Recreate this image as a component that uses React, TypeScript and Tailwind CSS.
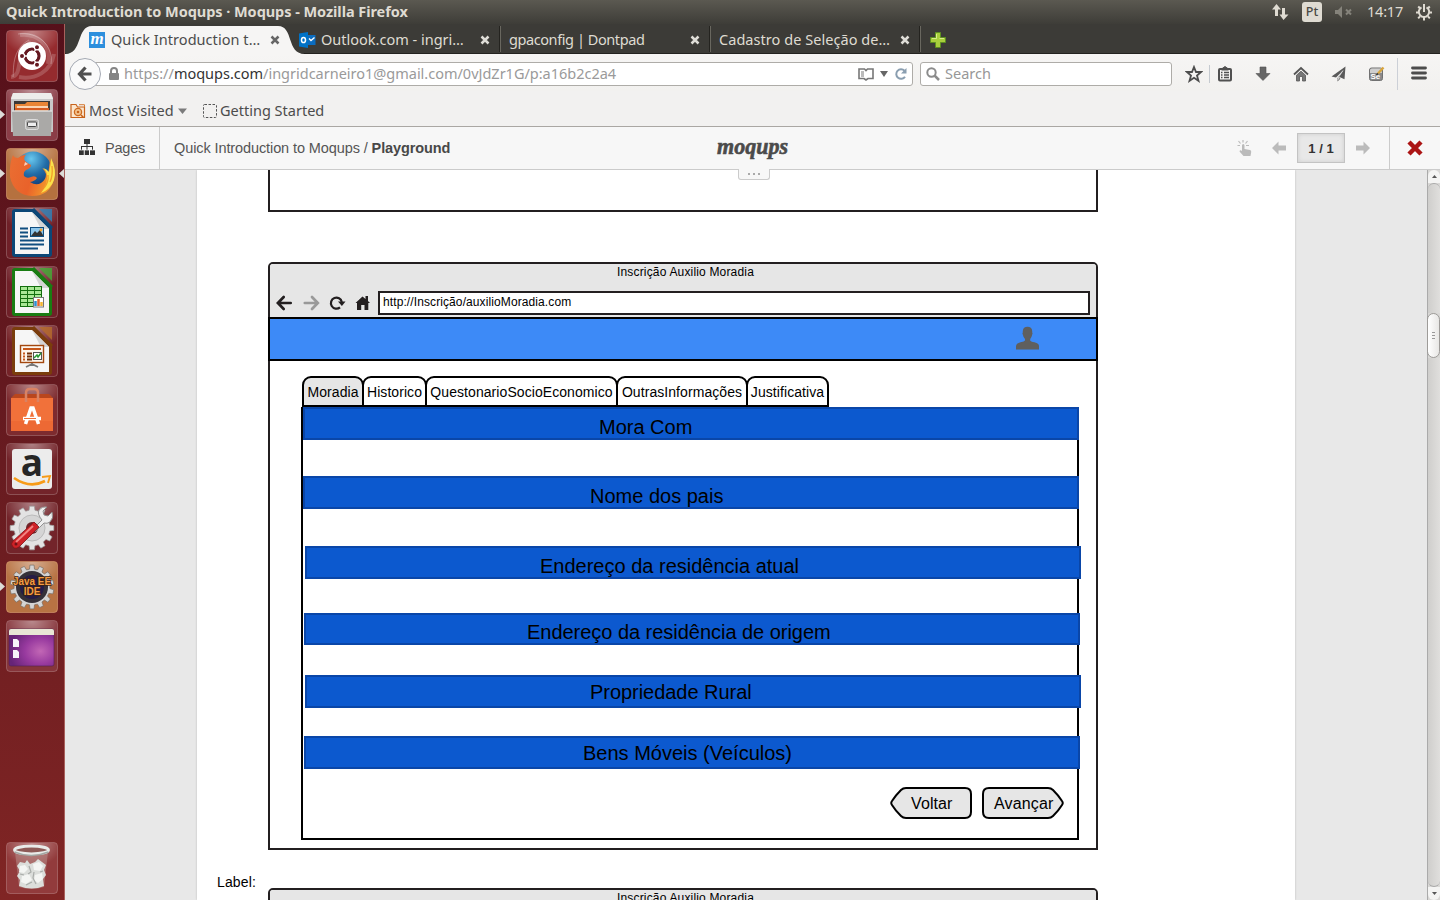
import React from "react";

const UI = "font-['Noto_Sans','Open_Sans',sans-serif]";

function Tile({ y, bg, edge = "rgba(255,255,255,.22)", children, left, right }: { y: string; bg: string; edge?: string; children: React.ReactNode; left?: boolean; right?: boolean }) {
  return (
    <div className={`relative h-[52px] w-full shrink-0 pl-[6px] ${y}`}>
      <svg className="overflow-visible" width="52" height="52" viewBox="0 0 52 52">
        <defs>
          <radialGradient id="shine" cx=".5" cy="0" r=".6">
            <stop offset="0" stopColor="#fff" stopOpacity=".42" />
            <stop offset="1" stopColor="#fff" stopOpacity="0" />
          </radialGradient>
        </defs>
        <rect x=".5" y=".5" width="51" height="51" rx="3.5" fill={bg} stroke={edge} />
        <rect x="1" y="1" width="50" height="40" rx="3" fill="url(#shine)" />
        {children}
      </svg>
      {left && (
        <svg className="absolute left-0 top-[21px]" width="5" height="9"><path d="M0 0L5 4.500L0 9Z" fill="#dcdcd8" /></svg>
      )}
      {right && (
        <svg className="absolute right-0 top-[21px]" width="5" height="9"><path d="M5 0L0 4.500L5 9Z" fill="#dcdcd8" /></svg>
      )}
    </div>
  );
}

const gearPath = (n: number, r1: number, r2: number, c: number) => {
  const pts: string[] = [];
  for (let i = 0; i < n; i++) {
    const a = (i / n) * Math.PI * 2 - Math.PI / 2;
    const s = Math.PI / n;
    [[-0.62, r1], [-0.42, r2], [0.42, r2], [0.62, r1]].forEach(([k, r]) => {
      pts.push(`${(c + Math.cos(a + s * k) * r).toFixed(2)} ${(c + Math.sin(a + s * k) * r).toFixed(2)}`);
    });
  }
  return `M${pts.join("L")}Z`;
};

function Doc({ color, dark, children }: { color: string; dark: string; children: React.ReactNode }) {
  return (
    <>
      <path d="M9 2H28L46 20V47Q46 50 43 50H9Q6 50 6 47V5Q6 2 9 2Z" fill={dark} />
      <path d="M33 2H46V15Z" fill={color} opacity=".8" />
      <path d="M9 5H26L43 22V47H9Z" fill="#f6f6f6" />
      <path d="M26 5L43 22H35Z" fill="#d4d4d4" />
      <path d="M27 2L46 21" stroke={dark} strokeWidth="3" />
      {children}
    </>
  );
}

function Launcher() {
  return (
    <aside className="flex w-[65px] shrink-0 flex-col border-r border-[#a8605c] bg-linear-to-b from-[#56101a] via-[#681b20] to-[#802524] pt-[6px] pb-[6px]">
      <Tile y="" bg="#952b2e">
        <path d="M5 47C18 46 8 22 25 12 M14 5C31 3 46 15 42 34 M48 24C45 42 29 50 13 47" fill="none" stroke="#fff" strokeOpacity=".18" strokeWidth="4" />
        <path d="M7 47C8 40 5 20 23 10 M12 4C31 1 48 15 45 34" fill="none" stroke="#fff" strokeOpacity=".3" strokeWidth="1" />
        <circle cx="26" cy="26" r="14" fill="#fff" />
        <circle cx="26" cy="26" r="7" fill="none" stroke="#641820" strokeWidth="3.200" />
        <g stroke="#fff" strokeWidth="1.200">
          <path d="M26 26L18 26M26 26L31 17M26 26L31 35" strokeWidth="1.400" />
          <circle cx="16" cy="26" r="2.600" fill="#641820" />
          <circle cx="31" cy="17.300" r="2.600" fill="#641820" />
          <circle cx="31" cy="34.700" r="2.600" fill="#641820" />
        </g>
        <circle cx="26" cy="26" r="5.200" fill="#fff" />
      </Tile>
      <Tile y="mt-[7px]" bg="#8b3d47" left>
        <path d="M7 4H45L47 9V43H5V9Z" fill="#c9c9c9" />
        <path d="M7 4H45L47 10H5Z" fill="#ededeb" />
        <rect x="8" y="12" width="36" height="10" fill="#3c3a38" />
        <path d="M9 15H19L21 13H42V23H9Z" fill="#e98536" />
        <path d="M11 18H42" stroke="#fff1df" strokeWidth="1.500" />
        <path d="M9 20H43" stroke="#d55c22" strokeWidth="2" />
        <path d="M6 22H46L45 47H7Z" fill="#aaa9a7" />
        <path d="M6 22H46" stroke="#ddd" strokeWidth="1.500" />
        <rect x="19.500" y="30.500" width="13" height="10" rx="2" fill="#b5b4b2" stroke="#ddd" />
        <rect x="21.500" y="33" width="9" height="4.500" rx="1" fill="#eee" stroke="#444" />
      </Tile>
      <Tile y="mt-[7px]" bg="#b5713f" edge="rgba(235,180,130,.5)" left right>
        <defs>
          <radialGradient id="globe" cx=".45" cy=".2" r=".75"><stop offset="0" stopColor="#68c7ee" /><stop offset=".55" stopColor="#226da8" /><stop offset="1" stopColor="#123d78" /></radialGradient>
          <linearGradient id="fox" x1="0" y1="0" x2="1" y2=".3"><stop offset="0" stopColor="#ea6f33" /><stop offset=".6" stopColor="#e9622a" /><stop offset="1" stopColor="#f39a2c" /></linearGradient>
        </defs>
        <circle cx="27" cy="22" r="18.500" fill="url(#globe)" />
        <path d="M7 7Q8 10 12 10Q15 7 20 6.500Q17 10 19 13Q21 15 25 17Q25 20 20 22Q17 24 18 28Q21 31 25 29Q29 27 31 30Q29 33 24 34Q30 38 35 35Q40 32 40 26Q39 23 36 20Q40 22 42 27L44 12Q50 21 48 31Q44 48 26 48Q8 47 4 29Q3 16 7 7Z" fill="url(#fox)" />
        <path d="M45 10Q51 22 48 32Q45 41 35 45Q41 38 41 30Q42 25 37 20Q41 21 43 24Q45 17 45 10Z" fill="#fbe14a" />
        <path d="M42 27Q43 34 38 40M46 18Q47 28 44 34" stroke="#f29d28" strokeWidth="1.300" fill="none" />
        <path d="M19 14L22 16L18 18Z" fill="#fff" opacity=".7" />
      </Tile>
      <Tile y="mt-[7px]" bg="#6f2028">
        <Doc color="#2d83ba" dark="#0c4777">
          <path d="M14 21.500H22M14 25.500H22M14 29.500H22M14 33.500H38M14 37.500H38M14 41.500H32" stroke="#104e80" strokeWidth="2" />
          <rect x="24.500" y="20.500" width="13" height="9" fill="#8ec6eb" stroke="#104e80" />
          <path d="M25 29L29 24L31 26L34 23L37 28V29Z" fill="#333" /><circle cx="35" cy="23" r="1.400" fill="#f5a32e" />
        </Doc>
      </Tile>
      <Tile y="mt-[7px]" bg="#6f2028">
        <Doc color="#42ad35" dark="#197c12">
          <rect x="14" y="20" width="22" height="21" fill="#126e0d" />
          {[20, 24, 28, 32, 36].map((y) => <path key={y} d={`M15 ${y + 2.5}H21M22 ${y + 2.5}H28M29 ${y + 2.5}H35`} stroke="#a9e795" strokeWidth="2.800" />)}
          <rect x="27.500" y="31.500" width="10" height="9.500" fill="#fff" stroke="#777" />
          <path d="M29.500 40V35" stroke="#2f8fd0" strokeWidth="2.500" /><path d="M32.500 40V33" stroke="#e5622b" strokeWidth="2.500" /><path d="M35.500 40V36" stroke="#f4b52f" strokeWidth="2.500" />
        </Doc>
      </Tile>
      <Tile y="mt-[7px]" bg="#752328">
        <Doc color="#b76b2a" dark="#7a3d0c">
          <rect x="14.500" y="20.500" width="23" height="17" fill="#fdf5ec" stroke="#a3480f" strokeWidth="1.400" />
          <path d="M17 24H35" stroke="#c6571a" strokeWidth="2" />
          <path d="M17 28.500H19M17 31.500H19M17 34.500H19" stroke="#c6571a" strokeWidth="2" /><path d="M21 28.500H26M21 31.500H26M21 34.500H26" stroke="#713009" strokeWidth="2" />
          <rect x="27.500" y="27.500" width="8" height="7" fill="#fff" stroke="#555" /><path d="M28 33L31 30L32 32L35 28" fill="none" stroke="#269831" strokeWidth="1.500" />
          <path d="M26 38V41M26 39L20 42M26 39L32 42" stroke="#777" strokeWidth="1.800" />
        </Doc>
      </Tile>
      <Tile y="mt-[7px]" bg="#7d2b2f">
        <path d="M5 14L9 10H43L47 14Z" fill="#b9461d" />
        <path d="M5 14H47V47H5Z" fill="#f1713a" /><path d="M5 37H47V47H5Z" fill="#ed6934" />
        <path d="M20 18V9Q20 5 24 5H28Q32 5 32 9V18" fill="none" stroke="#d98263" strokeWidth="2.500" />
        <path d="M19.500 40L25 24H27L32.500 40" fill="none" stroke="#fff" strokeWidth="3.500" /><path d="M17 34.500H35" stroke="#fff" strokeWidth="3.500" /><path d="M18 34.500H30" stroke="#f1713a" strokeWidth="1" />
      </Tile>
      <Tile y="mt-[7px]" bg="#73242a">
        <rect x="6" y="6" width="40" height="40" rx="3" fill="#ececec" />
        <text x="26" y="33" textAnchor="middle" fontFamily="Open Sans, sans-serif" fontWeight="700" fontSize="37" fill="#262626">a</text>
        <path d="M8 35Q24 46 39 38" fill="none" stroke="#f79b18" strokeWidth="2.600" /><path d="M36 34L44 33L42 40" fill="none" stroke="#f79b18" strokeWidth="1.900" />
      </Tile>
      <Tile y="mt-[7px]" bg="#73242a">
        <path d={gearPath(12, 18, 22, 26)} fill="#e3e3e3" stroke="#999" strokeWidth=".7" />
        <circle cx="26" cy="26" r="13" fill="#d5d5d5" stroke="#bbb" /><circle cx="26" cy="26" r="6" fill="#6e252a" />
        <path d="M27 27L36 18Q31 12 33 8Q36 4 41 5L37 9L38 13L42 14L46 10Q48 16 44 20Q41 22 38 21L29 30Z" fill="#eee" stroke="#888" strokeWidth=".9" />
        <path d="M28 20L33 25L14 44Q10 48 7 45Q4 42 7 39Z" fill="#ce2227" stroke="#821116" strokeWidth=".8" /><path d="M27 24L10 40" stroke="#f28482" strokeWidth="1.800" />
        <circle cx="10" cy="42" r="1.500" fill="#701217" />
      </Tile>
      <Tile y="mt-[7px]" bg="#b87343" edge="rgba(235,180,130,.5)" left>
        <path d={gearPath(14, 18, 22, 26)} fill="#d4d4d4" stroke="#776b61" strokeWidth=".7" />
        <circle cx="26" cy="26" r="16" fill="#343038" /><circle cx="26" cy="26" r="12" fill="#251c47" />
        <g fontFamily="Liberation Sans, sans-serif" fontWeight="700" fontSize="10" textAnchor="middle" fill="#f49b43" stroke="#3b2211" strokeWidth="1.500" paintOrder="stroke">
          <text x="26" y="24" textLength="38" lengthAdjust="spacingAndGlyphs">Java EE</text><text x="26" y="34">IDE</text>
        </g>
      </Tile>
      <Tile y="mt-[7px]" bg="#86353b">
        <defs><radialGradient id="desk" cx=".7" cy=".6" r=".7"><stop offset="0" stopColor="#c267b5" /><stop offset=".5" stopColor="#983a9f" /><stop offset="1" stopColor="#662477" /></radialGradient></defs>
        <rect x="3" y="9" width="45" height="37" rx="2" fill="url(#desk)" stroke="#53204d" strokeWidth=".6" />
        <path d="M3 11Q3 9 5 9H46Q48 9 48 11V15H3Z" fill="#e8e6d5" />
        <path d="M7 19H11L13 21V27H7ZM7 30H11L13 32V38H7Z" fill="#f8f4fa" />
      </Tile>
      <Tile y="mt-auto" bg="#923b3c">
        <path d="M9 10H42L38 45Q26 49 13 45Z" fill="#b9918d" fillOpacity=".5" />
        <path d="M11 24L14 20L19 21L21 18L24 22L29 20L32 17L36 20L40 23L38 28L40 33L37 37L38 44Q26 49 13 44L14 38L11 34L14 29Z" fill="#dcdedb" />
        <path d="M14 24L19 23L22 27L18 31L13 30ZM27 22L33 20L37 24L34 29L28 28ZM16 34L23 32L26 38L20 42L15 40ZM29 33L36 31L37 37L32 41L28 38Z" fill="#f4f5f3" />
        <path d="M23 24L25 30L22 32M28 30L27 36L30 42M14 32L18 33M34 30L37 29M20 43L26 40" fill="none" stroke="#a9aca9" strokeWidth="1.200" />
        <ellipse cx="25.500" cy="8" rx="17" ry="3.800" fill="#8e5a57" stroke="#e9ebe9" strokeWidth="2.800" />
        <path d="M8.500 10Q25 17 42.500 10" fill="none" stroke="#a3a8a4" strokeWidth="1.500" />
      </Tile>
    </aside>
  );
}

function TopBar() {
  return (
    <header className={`flex h-6 shrink-0 items-center bg-linear-to-b from-[#5b5951] to-[#3e3d38] pl-[6px] text-[#dfdbd2] ${UI}`}>
      <span className="-mt-px whitespace-nowrap text-[14.5px] font-bold tracking-[-0.05px]">Quick Introduction to Moqups · Moqups - Mozilla Firefox</span>
      <div className="ml-auto flex items-center pr-[7px]">
        <svg width="18" height="18" viewBox="0 0 18 18" fill="#dfdbd2"><path d="M5.500 1L10 6.500H7V13H4V6.500H1ZM12.500 17L8.500 11.500H11V5H14V11.500H17.500Z" /></svg>
        <div className="ml-[13px] flex h-5 w-5 items-center justify-center rounded-[3px] bg-[#dfdbd2] text-[12.5px] font-medium text-[#4a4944]">Pt</div>
        <svg className="ml-[12px]" width="19" height="14" viewBox="0 0 19 14"><path d="M1 5H4L8 1V13L4 9H1Z" fill="#85837b" /><path d="M12 4.500L17 9.500M17 4.500L12 9.500" stroke="#85837b" strokeWidth="2" /></svg>
        <span className="-mt-px ml-[14px] w-[36px] whitespace-nowrap text-[14.5px] tracking-[-0.2px]">14:17</span>
        <svg className="ml-[12px]" width="18" height="18" viewBox="0 0 18 18"><g fill="none" stroke="#dfdbd2" strokeWidth="2"><path d="M6.500 4.300A5.200 5.200 0 1 0 11.500 4.300M9 1V9" /><path d="M1 9.500H3.500M14.500 9.500H17M9 14V17.500M3.200 15.300L5 13.300M14.800 15.300L13 13.300M3.200 3.500L5 5.300M14.800 3.500L13 5.300" /></g></svg>
      </div>
    </header>
  );
}

function Close({ c = "#e0ded8" }: { c?: string }) {
  return <svg className="shrink-0" width="10" height="10" viewBox="0 0 10 10"><path d="M1.500 1.500L8.500 8.500M8.500 1.500L1.500 8.500" stroke={c} strokeWidth="2.500" /></svg>;
}

function Sep() {
  return <div className="h-[26px] w-[2px] shrink-0 border-l border-[#24231f] bg-[#69675f]" />;
}

function TabStrip() {
  return (
    <div className={`relative flex h-[30px] shrink-0 items-center border-b border-[#242320] bg-[#3c3b37] text-[14.5px] text-[#dfdbd2] ${UI}`}>
      <svg className="absolute left-0 top-[2px]" width="240" height="28" viewBox="0 0 240 28"><path d="M0 28C18 28 11 0 27 0H213C229 0 221 28 240 28Z" fill="#f6f5f4" /></svg>
      <div className="relative flex h-full w-[234px] items-center pl-[24px] pr-[19px] pt-[2px] text-[#4c4c4c]">
        <svg className="overflow-visible" width="16" height="16" viewBox="0 0 16 16"><rect width="16" height="16" fill="#2d8fdd" /><text x="8" y="12" textAnchor="middle" fontFamily="Liberation Serif, serif" fontStyle="italic" fontWeight="700" fontSize="17" fill="#fff">m</text></svg>
        <span className="ml-[6px] grow whitespace-nowrap tracking-[0.05px]">Quick Introduction t…</span>
        <Close c="#666" />
      </div>
      <div className="relative flex h-full w-[200px] items-center pr-[9px] pt-[2px]">
        <svg width="17" height="16" viewBox="0 0 17 16"><path d="M7 3H16.500V13H7Z" fill="#0a6cc0" /><path d="M0 1.500L9 0V16L0 14.500Z" fill="#0072c6" /><ellipse cx="4.500" cy="8" rx="2" ry="2.600" fill="none" stroke="#fff" strokeWidth="1.500" /><path d="M10 6.500L12 8.500L15.500 5.500" fill="none" stroke="#fff" strokeWidth="1.300" /></svg>
        <span className="ml-[5px] grow whitespace-nowrap">Outlook.com - ingri…</span>
        <Close />
      </div>
      <Sep />
      <div className="flex h-full w-[208px] items-center pl-[8px] pr-[9px] pt-[2px]"><span className="grow whitespace-nowrap tracking-[-0.42px]">gpaconfig | Dontpad</span><Close /></div>
      <Sep />
      <div className="flex h-full w-[208px] items-center pl-[8px] pr-[9px] pt-[2px]"><span className="grow whitespace-nowrap tracking-[0.05px]">Cadastro de Seleção de…</span><Close /></div>
      <Sep />
      <svg className="ml-[9px] mt-[2px]" width="16" height="16" viewBox="0 0 16 16"><path d="M5.500 .5H10.500V5.500H15.500V10.500H10.500V15.500H5.500V10.500H.5V5.500H5.500Z" fill="#a8ce3c" stroke="#5d8f20" /><path d="M6.500 2V6.500H2M9.500 6.500H14" fill="none" stroke="#d9ec8a" /></svg>
    </div>
  );
}

function NavBar() {
  return (
    <div className={`flex h-[37px] shrink-0 items-center bg-linear-to-b from-[#f6f5f4] to-[#f2f1ef] pt-[3px] text-[14.5px] ${UI}`}>
      <div className="z-10 ml-[4px] flex h-8 w-8 shrink-0 items-center justify-center rounded-full border border-[#a4a9b3] bg-[#fafafa]">
        <svg width="16" height="16" viewBox="0 0 16 16"><path d="M14.500 8H3M8.500 1.500L2.500 8L8.500 14.500" fill="none" stroke="#505050" strokeWidth="3.200" /></svg>
      </div>
      <div className="-ml-[6px] flex h-6 w-[818px] shrink-0 items-center rounded-r-[3px] border border-[#aeaca8] bg-white pl-[12px] pr-[4px] text-[#9a9a9a]">
        <svg width="12" height="14" viewBox="0 0 12 14"><rect x="1" y="6" width="10" height="7" rx="1" fill="#858585" /><path d="M3 7V4A3 3 0 0 1 9 4V7" fill="none" stroke="#858585" strokeWidth="2" /></svg>
        <span className="ml-[4px] grow whitespace-nowrap tracking-[-0.01px]">https://<span className="text-[#333]">moqups.com</span>/ingridcarneiro1@gmail.com/0vJdZr1G/p:a16b2c2a4</span>
        <svg width="16" height="13" viewBox="0 0 16 13" fill="none" stroke="#777" strokeWidth="1.600"><path d="M1 1H6.500L8 2.500L9.500 1H15V10.500H10L8 12L6 10.500H1Z" /><path d="M3 4H6M3 6H6M3 8H6" strokeWidth="1" /></svg>
        <svg className="ml-[6px]" width="8" height="6" viewBox="0 0 8 6"><path d="M0 0H8L4 6Z" fill="#666" /></svg>
        <svg className="ml-[6px]" width="14" height="14" viewBox="0 0 14 14"><path d="M10.500 3.700A4.800 4.800 0 1 0 11 9.800" fill="none" stroke="#8a9eb0" strokeWidth="2" /><path d="M12.500 1V6.500H7Z" fill="#8a9eb0" /></svg>
      </div>
      <div className="ml-[7px] flex h-6 w-[252px] shrink-0 items-center rounded-[3px] border border-[#aeaca8] bg-white pl-[5px] text-[#979797]">
        <svg width="14" height="14" viewBox="0 0 14 14"><circle cx="5.500" cy="5.500" r="4.200" fill="none" stroke="#8b8b8b" strokeWidth="2" /><path d="M8.500 8.500L13 13" stroke="#8b8b8b" strokeWidth="2.500" /></svg>
        <span className="ml-[5px]">Search</span>
      </div>
      <div className="flex grow items-center pl-[13px] text-[#505050]">
        <svg width="18" height="18" viewBox="0 0 18 18"><path d="M9 2L11 7H16L12 10.500L13.500 15.800L9 12.800L4.500 15.800L6 10.500L2 7H7Z" fill="none" stroke="#4d4d4d" strokeWidth="1.800" /></svg>
        <div className="ml-[6px] h-[18px] w-px bg-[#c5cad0]" />
        <svg className="ml-[7px]" width="16" height="16" viewBox="0 0 16 16"><rect x="2" y="3" width="12" height="11.500" rx="1" fill="none" stroke="#505050" strokeWidth="2" /><path d="M4.500 3L8 .5L11.500 3V4H4.500Z" fill="#505050" stroke="#505050" /><path d="M4 6.500H5.500M7 6.500H12M4 9H5.500M7 9H12M4 11.500H5.500M7 11.500H12" stroke="#505050" strokeWidth="1.300" /></svg>
        <svg className="ml-[22px]" width="16" height="16" viewBox="0 0 16 16"><path d="M5 1H11V7.500H15L8 14.500L1 7.500H5Z" fill="#666" stroke="#505050" strokeWidth=".6" /></svg>
        <svg className="ml-[22px]" width="16" height="16" viewBox="0 0 16 16"><path d="M1 8.500L8 2L15 8.500" fill="none" stroke="#555" strokeWidth="1.800" /><path d="M3.500 9.200L8 5.200L12.500 9.200V15H9.500V10.500H6.500V15H3.500Z" fill="#777" stroke="#555" strokeWidth=".8" /></svg>
        <svg className="ml-[22px]" width="16" height="16" viewBox="0 0 16 16"><path d="M14.500 .5L.5 10.500L5 11.500L12 4.500L6.500 12L9 11.200L13.500 13.200Z" fill="#5a5a5a" /><path d="M6.500 12V15.500L9.500 12.500" fill="#5a5a5a" /><path d="M12 4.500L8 10.500L7 14" stroke="#eee" strokeWidth=".8" fill="none" /></svg>
        <svg className="ml-[22px] overflow-visible" width="16" height="16" viewBox="0 0 16 16"><rect x=".5" y="2" width="13" height="12.500" rx="2" fill="#8a8a8a" stroke="#717171" /><path d="M1 4Q1 2.500 3 2.500H12L13 7H1Z" fill="#cfcfcf" /><text x="1.500" y="13" fontFamily="Liberation Sans" fontWeight="700" fontSize="8" fill="#fff">Se</text><path d="M9 7.500L14.500 1.500" stroke="#d8a43b" strokeWidth="2.300" /><path d="M7.500 9L9 7.500" stroke="#333" strokeWidth="1.500" /></svg>
        <div className="ml-[12px] h-[32px] w-px bg-[#ccd0d7]" />
        <svg className="-mt-[2px] ml-[13px]" width="16" height="14" viewBox="0 0 16 14"><path d="M1.500 2H14.500M1.500 7H14.500M1.500 12H14.500" stroke="#4c4c4c" strokeWidth="2.800" strokeLinecap="round" /></svg>
      </div>
    </div>
  );
}

function Bookmarks() {
  return (
    <div className={`flex h-[36px] shrink-0 items-center border-b border-[#aaa7a3] bg-[#f2f1f0] pl-[5px] pt-[4px] text-[14.5px] text-[#4c4c4c] ${UI}`}>
      <svg width="16" height="16" viewBox="0 0 16 16"><path d="M1 1.500H6L7.500 4H14.500V14.500H1Z" fill="#fbe6ce" stroke="#c8631b" strokeWidth="1.200" /><path d="M9 1.700H14.500V4" fill="none" stroke="#d47a34" /><circle cx="8" cy="9" r="3.600" fill="#f3c590" stroke="#cd6a20" strokeWidth="1.300" /><circle cx="8" cy="9" r="1.300" fill="#c8631b" /><path d="M11 12L13.500 14.500" stroke="#c8631b" strokeWidth="1.600" /></svg>
      <span className="ml-[3px] w-[86px] whitespace-nowrap tracking-[0.12px]">Most Visited</span>
      <svg className="ml-[3px]" width="9" height="6" viewBox="0 0 9 6"><path d="M0 .5H9L4.500 6Z" fill="#7b7b7b" /></svg>
      <svg className="ml-[15px]" width="16" height="16" viewBox="0 0 16 16"><rect x="1.500" y="1.500" width="13" height="13" rx="1" fill="none" stroke="#555" strokeDasharray="2.500 1.500" /></svg>
      <span className="ml-[2px] whitespace-nowrap">Getting Started</span>
    </div>
  );
}

function MoqupsHeader() {
  return (
    <div className="relative flex h-[43px] shrink-0 items-center border-b border-[#cbcbcb] bg-[#f7f7f7] font-['Liberation_Sans',Arial,sans-serif] text-[#555]">
      <div className="flex h-full w-[95px] items-center border-r border-[#cbcbcb] pl-[14px] text-[14.500px]">
        <svg className="-mt-[2px]" width="16" height="16" viewBox="0 0 16 16" fill="#333"><path d="M5 0H11V5H8.500V7H14V11H16V16H10.500V11H13V8H8.500V11H11V16H5V11H7.500V8H3V11H5.500V16H0V11H2V7H7.500V5H5Z" /><path d="M0 11H16" stroke="#f7f7f7" strokeWidth=".7" /><path d="M5.250 11V16M10.500 11V16" stroke="#f7f7f7" strokeWidth="1" /></svg>
        <span className="ml-[10px] pt-[2px] tracking-[-0.2px]">Pages</span>
      </div>
      <span className="ml-[14px] w-[300px] whitespace-nowrap pt-[2px] text-[14.500px] tracking-[-0.1px]">Quick Introduction to Moqups / <b className="text-[#484848]">Playground</b></span>
      <svg className="ml-[242px] overflow-visible" width="74" height="26" viewBox="0 0 74 26"><text x="1" y="18.500" textLength="71" lengthAdjust="spacingAndGlyphs" fontFamily="Liberation Serif, serif" fontStyle="italic" fontWeight="700" fontSize="23" fill="#4b4b4b" stroke="#4b4b4b" strokeWidth=".6">moqups</text></svg>
      <div className="ml-auto flex h-full items-center">
        <svg width="16" height="18" viewBox="0 0 16 18"><path d="M5 6.500Q5 5 6.200 5Q7.500 5 7.500 6.500V10L13 11Q14.500 11.500 14.200 13L13.500 17H6.500L2.500 12.500Q3 10.500 5 12Z" fill="#bbb" /><path d="M6 3.500V1M3.500 4.500L1.500 2M8.500 4.500L10.500 2M3 6.500H.5M9 6.500H12" stroke="#bbb" strokeWidth="1.200" /></svg>
        <svg className="ml-[18px]" width="16" height="14" viewBox="0 0 16 14"><path d="M1 7L7.500 .5V4.500H15V9.500H7.500V13.500Z" fill="#bbb" /></svg>
        <div className="ml-[10px] flex h-[30px] w-[48px] items-center justify-center border border-[#c3c3c3] bg-[#e8e8e8] pt-[2px] text-[13px] font-bold text-[#333] shadow-[inset_0_0_4px_#ccc]">1 / 1</div>
        <svg className="ml-[10px]" width="16" height="14" viewBox="0 0 16 14"><path d="M15 7L8.500 .5V4.500H1V9.500H8.500V13.500Z" fill="#bbb" /></svg>
        <div className="ml-[18px] flex h-full w-[51px] items-center justify-center border-l border-[#cbcbcb]">
          <svg width="16" height="16" viewBox="0 0 16 16"><path d="M2 2L14 14M14 2L2 14" stroke="#ab1414" strokeWidth="4.500" /></svg>
        </div>
      </div>
      <div className="absolute left-[673px] top-[42px] z-10 flex h-[11px] w-[32px] items-center justify-center gap-[3px] rounded-b-[3px] border border-t-0 border-[#cbcbcb] bg-[#f7f7f7]">
        <i className="size-[2px] bg-[#aaa]" /><i className="size-[2px] bg-[#aaa]" /><i className="size-[2px] bg-[#aaa]" />
      </div>
    </div>
  );
}

function WindowChrome() {
  return (
    <div className="h-[53px] shrink-0 bg-[#e6e6e6] text-[12px] text-black">
      <div className="h-[27px] pl-[347px] leading-[16px] tracking-[0.17px]">Inscrição Auxilio Moradia</div>
      <div className="flex items-center pl-[6px] pr-[6px]">
        <svg width="17" height="16" viewBox="0 0 17 16"><path d="M14.700 8H2.500M7.700 2L1.900 8L7.700 14" fill="none" stroke="#231f20" strokeWidth="2.700" strokeLinecap="round" /></svg>
        <svg className="ml-[10px]" width="17" height="16" viewBox="0 0 17 16"><path d="M1.800 8H14M9 2L14.800 8L9 14" fill="none" stroke="#999" strokeWidth="2.700" strokeLinecap="round" /></svg>
        <svg className="ml-[9px]" width="17" height="16" viewBox="0 0 17 16"><path d="M11 12.300A5.500 5.500 0 1 1 12.800 7" fill="none" stroke="#231f20" strokeWidth="2.200" /><path d="M9 6.500H16.500L12.900 11Z" fill="#231f20" /></svg>
        <svg className="ml-[9px]" width="16" height="16" viewBox="0 0 16 16"><path d="M.5 8L7.500 1.500L10.500 4V1H13V6L15 8H13.300V15H9.500V10H6.200V15H2V8Z" fill="#231f20" /></svg>
        <div className="ml-[7px] h-[24px] grow border-2 border-[#231f20] bg-white pl-[3px] leading-[18px] tracking-[0.1px]">http://Inscrição/auxilioMoradia.com</div>
      </div>
    </div>
  );
}

const tabs = [
  { t: "Moradia", w: "w-[62px]", bg: "bg-[#e6e6e6]" },
  { t: "Historico", w: "w-[65px]", bg: "bg-white" },
  { t: "QuestonarioSocioEconomico", w: "w-[193px]", bg: "bg-white" },
  { t: "OutrasInformações", w: "w-[132px]", bg: "bg-white" },
  { t: "Justificativa", w: "w-[83px]", bg: "bg-white" },
];

const bars = [
  { t: "Mora Com", cls: "ml-0 h-[33px] leading-[36px]", pl: "pl-[294px]" },
  { t: "Nome dos pais", cls: "mt-[36px] ml-0 h-[33px] leading-[36px]", pl: "pl-[285px]" },
  { t: "Endereço da residência atual", cls: "mt-[37px] ml-[2px] h-[33px] leading-[36px]", pl: "pl-[233px]" },
  { t: "Endereço da residência de origem", cls: "mt-[34px] ml-[1px] h-[32px] leading-[34px] tracking-[-0.03px]", pl: "pl-[221px]" },
  { t: "Propriedade Rural", cls: "mt-[30px] ml-[2px] h-[33px] leading-[30px] tracking-[-0.04px]", pl: "pl-[283px]" },
  { t: "Bens Móveis (Veículos)", cls: "mt-[28px] ml-[1px] h-[33px] leading-[30px]", pl: "pl-[277px]" },
];

function MainWindow() {
  return (
    <div className="ml-[71px] mt-[50px] flex h-[588px] w-[830px] shrink-0 flex-col rounded-t-[5px] border-2 border-[#231f20] bg-white">
      <div className="overflow-hidden rounded-t-[3px]"><WindowChrome /></div>
      <div className="-mx-[2px] flex h-[44px] shrink-0 items-start border-2 border-black bg-[#3d8af7] pl-[745px] pt-[7px]">
        <svg width="25" height="24" viewBox="0 0 25 24"><path d="M12.500 .8Q16.800 .8 17.200 5V6.500Q18 7 17.200 8.500Q16.500 12 15.200 13V14.500Q15.500 15.500 19.500 16.300Q24 17.500 24 20V23.500H1V20Q1 17.500 5.500 16.300Q9.500 15.500 10 14.500V13Q8.500 12 7.800 8.500Q7 7 7.800 6.500V5Q8.200 .8 12.500 .8Z" fill="#5f5f5f" /></svg>
      </div>
      <div className="mt-[15px] flex pl-[32px]">
        {tabs.map((t, i) => (
          <div key={t.t} className={`flex h-[31px] shrink-0 items-center justify-center whitespace-nowrap rounded-t-[9px] border-2 border-black pt-[2px] text-[14px] tracking-[0.07px] ${i ? "-ml-[2px]" : ""} ${t.w} ${t.bg}`}>{t.t}</div>
        ))}
      </div>
      <div className="ml-[31px] flex h-[433px] w-[778px] flex-col border-2 border-t-0 border-black">
        {bars.map((b) => (
          <div key={b.t} className={`w-[776px] shrink-0 whitespace-nowrap border-2 border-[#0a46a8] bg-[#0c59cf] text-[20px] ${b.cls} ${b.pl}`}>{b.t}</div>
        ))}
        <div className="mt-[18px] flex pl-[587px] text-[16px]">
          <div className="grid">
            <svg className="col-start-1 row-start-1" width="82" height="32" viewBox="0 0 82 32"><path d="M16 1H75Q81 1 81 7V25Q81 31 75 31H16Q13 31 11 29Q5 23 2 18Q.5 16 2 14Q5 9 11 3Q13 1 16 1Z" fill="#e6e6e6" stroke="#000" strokeWidth="2" /></svg>
            <span className="col-start-1 row-start-1 pl-[21px] leading-[33px] tracking-[0.1px]">Voltar</span>
          </div>
          <div className="ml-[10px] grid">
            <svg className="col-start-1 row-start-1" width="82" height="32" viewBox="0 0 82 32"><path d="M66 1H7Q1 1 1 7V25Q1 31 7 31H66Q69 31 71 29Q77 23 80 18Q81.500 16 80 14Q77 9 71 3Q69 1 66 1Z" fill="#e6e6e6" stroke="#000" strokeWidth="2" /></svg>
            <span className="col-start-1 row-start-1 pl-[12px] leading-[33px] tracking-[0.15px]">Avançar</span>
          </div>
        </div>
      </div>
    </div>
  );
}

function Scrollbar() {
  return (
    <div className="flex w-[13px] shrink-0 flex-col items-center border-l border-[#aaa] bg-[#d9d8d6]">
      <div className="flex h-[13px] w-full items-center justify-center rounded-t-full bg-[#f4f4f3]"><svg width="5" height="3"><path d="M0 3L2.500 0L5 3Z" fill="#555" /></svg></div>
      <div className="h-[130px] w-full rounded-t-full border-t border-[#aaa] bg-linear-to-r from-[#cfcecc] to-[#e0dfdd]" />
      <div className="-ml-px flex h-[45px] w-[13px] shrink-0 flex-col items-center justify-center gap-[2px] rounded-full border border-[#9d9b98] bg-linear-to-r from-white to-[#e8e7e5]">
        <i className="h-px w-[3px] bg-[#999]" /><i className="h-px w-[3px] bg-[#999]" /><i className="h-px w-[3px] bg-[#999]" />
      </div>
      <div className="w-full grow rounded-b-full border-b border-[#aaa] bg-linear-to-r from-[#cfcecc] to-[#e0dfdd]" />
      <div className="flex h-[13px] w-full items-center justify-center rounded-b-full bg-[#f4f4f3]"><svg width="5" height="3"><path d="M0 0H5L2.500 3Z" fill="#555" /></svg></div>
    </div>
  );
}

export default function App() {
  return (
    <div className="flex h-[900px] w-[1440px] flex-col overflow-hidden bg-[#e8e8e8]">
      <TopBar />
      <div className="flex min-h-0 grow">
        <Launcher />
        <main className="flex min-w-0 grow flex-col">
          <TabStrip />
          <NavBar />
          <Bookmarks />
          <MoqupsHeader />
          <div className="flex min-h-0 grow overflow-hidden font-['Liberation_Sans',Arial,sans-serif] text-black">
            <div className="ml-[132px] flex w-[1098px] shrink-0 flex-col overflow-hidden bg-white shadow-[0_0_2px_#bbb]">
              <div className="ml-[71px] h-[42px] w-[830px] shrink-0 border-2 border-t-0 border-[#231f20]" />
              <MainWindow />
              <div className="mt-[22px] flex h-[28px] shrink-0 pl-[20px]">
                <span className="w-[51px] text-[14px] leading-[21px] tracking-[0.15px]">Label:</span>
                <div className="mt-[16px] h-[60px] w-[830px] shrink-0 overflow-hidden rounded-t-[5px] border-2 border-[#231f20]"><WindowChrome /></div>
              </div>
            </div>
            <div className="grow" />
            <Scrollbar />
          </div>
        </main>
      </div>
    </div>
  );
}
